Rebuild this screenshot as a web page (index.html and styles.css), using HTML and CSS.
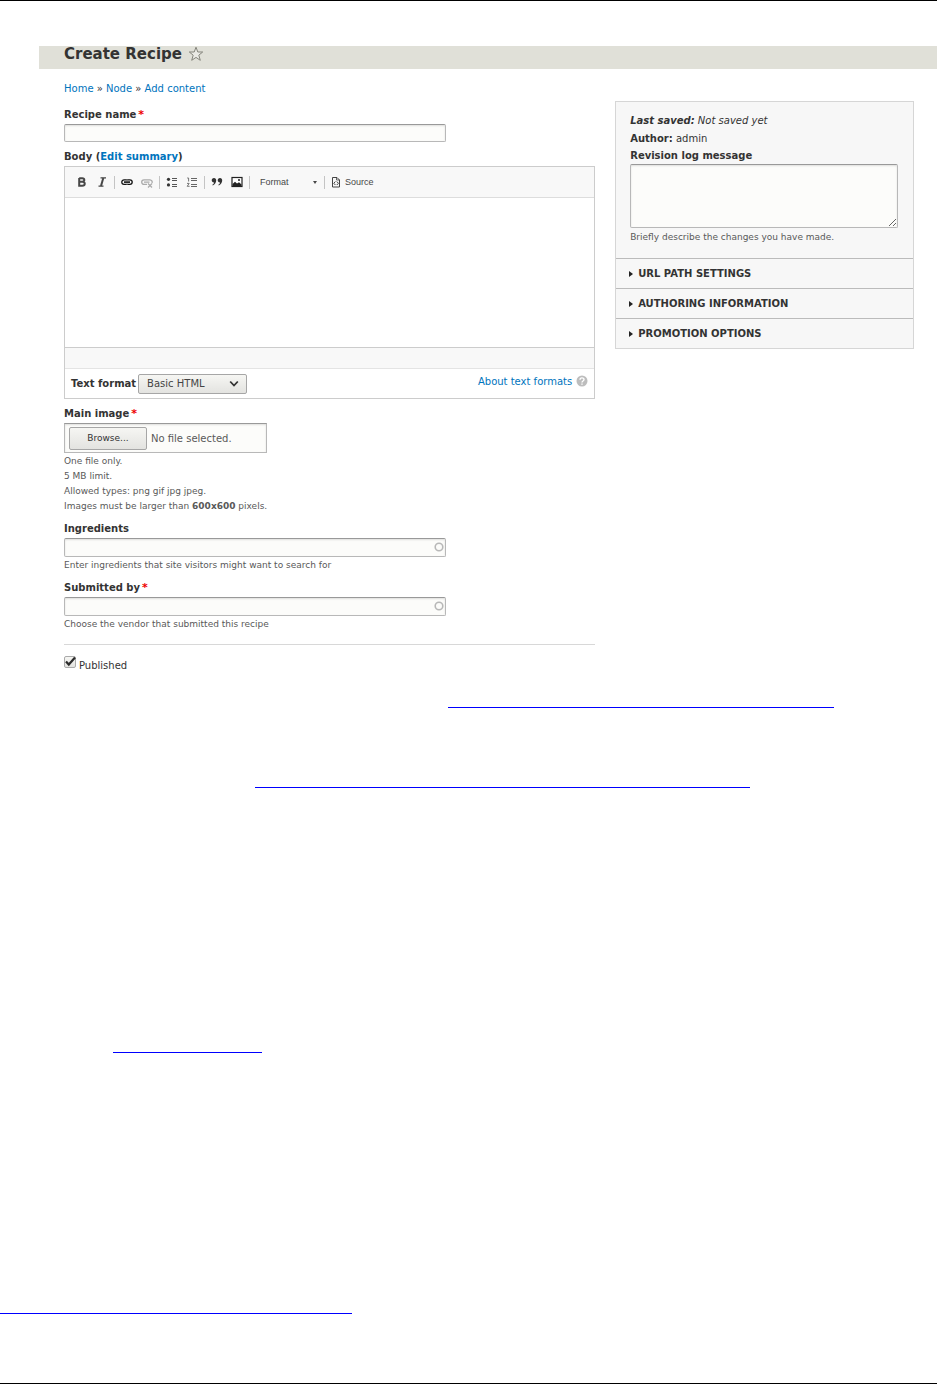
FILE: index.html
```html
<!DOCTYPE html>
<html lang="en">
<head>
    <meta charset="UTF-8">
    <meta name="viewport" content="width=device-width, initial-scale=1.0">
    <title>Create Recipe</title>
    <link rel="stylesheet" href="styles.css">
</head>
<body>
    <div class="sheet">
        <header class="title-bar">
            <h1>Create Recipe</h1>
            <button type="button" class="star" aria-label="Add to shortcuts">
                <svg width="16" height="16" viewBox="0 0 16 16" fill="#e9e9e4" stroke="#85857c" stroke-width="1"><path d="M8 1.2L9.8 6H14.7L10.8 9.2L12.3 14.3L8 11.4L3.7 14.3L5.2 9.2L1.3 6H6.2Z"/></svg>
            </button>
        </header>

        <nav class="breadcrumb">
            <a href="#">Home</a> » <a href="#">Node</a> » <a href="#">Add content</a>
        </nav>

        <form class="columns">
            <div class="main">
                <div class="field">
                    <label class="label" for="name">Recipe name<span class="required">*</span></label>
                    <input class="text short" type="text" id="name">
                </div>

                <div class="field">
                    <div class="label"><label for="body">Body</label> (<a href="#">Edit summary</a>)</div>
                    <div class="editor">
                        <div class="toolbar">
                            <button type="button" aria-label="Bold"><svg width="12" height="12" viewBox="0 0 12 12" fill="none" stroke="#474747" stroke-width="2"><path d="M3.2 2.2H6.2C9 2.2 9 5.8 6.2 5.8H3.2M6.2 5.8C9.6 5.8 9.6 9.8 6.2 9.8H3.2V2"/></svg></button>
                            <button type="button" aria-label="Italic"><svg width="12" height="12" viewBox="0 0 12 12" fill="none" stroke="#474747"><path d="M4.5 1.8H10M2.5 10.2H7.5" stroke-width="1.2"/><path d="M7.3 2L5 10" stroke-width="2"/></svg></button>
                            <span class="sep"></span>
                            <button type="button" aria-label="Link"><svg width="12" height="12" viewBox="0 0 12 12" fill="none" stroke="#111"><rect x="0.8" y="3.8" width="10.4" height="4.6" rx="2.3" stroke-width="1.3"/><path d="M3 6.1H9" stroke-width="1.6"/><path d="M6 3V4.5M6 7.8V9" stroke="#777"/></svg></button>
                            <button type="button" aria-label="Unlink"><svg width="12" height="12" viewBox="0 0 12 12" fill="none" stroke="#aaa"><path d="M6 8.4H3A2.3 2.3 0 0 1 3 3.8H9A2.3 2.3 0 0 1 11 7M3 6.1H8.5" stroke-width="1.3"/><path d="M7 7.5L11 11.5M11 7.5L7 11.5" stroke-width="1.2"/></svg></button>
                            <span class="sep"></span>
                            <button type="button" aria-label="Bulleted list"><svg width="12" height="12" viewBox="0 0 12 12" fill="#333"><circle cx="2.5" cy="3.3" r="1.6"/><circle cx="2.5" cy="8.9" r="1.6"/><path d="M6 2H11V3H6zM6 4H11V5H6zM6 8H11V9H6zM6 10H11V11H6z" fill="#555"/></svg></button>
                            <button type="button" aria-label="Numbered list"><svg width="12" height="12" viewBox="0 0 12 12" fill="none" stroke="#666"><path d="M1.2 2H2.6V5.5M1 7.4H3.2L1.2 10.3H3.6" stroke-width="0.9"/><path d="M5 2.5H11M5 4.5H11M5 8.5H11M5 10.5H11"/></svg></button>
                            <span class="sep"></span>
                            <button type="button" aria-label="Block quote"><svg width="12" height="12" viewBox="0 0 12 12" fill="#333"><path d="M3 2C6.2 2 6 7.6 1.8 9.4L1.3 8.7C2.6 7.9 3 7.2 3 6.4C-0.1 6.4 0 2 3 2zM9 2C12.2 2 12 7.6 7.8 9.4L7.3 8.7C8.6 7.9 9 7.2 9 6.4C5.9 6.4 6 2 9 2z"/></svg></button>
                            <button type="button" aria-label="Image"><svg width="12" height="12" viewBox="0 0 12 12"><rect x="1" y="1.5" width="10" height="9" fill="#fff" stroke="#222" stroke-width="1.2"/><path d="M1.5 10V8L4 5.8L6 7.5L8 6.3L10.5 8.4V10z" fill="#222"/><circle cx="8" cy="4" r="1" fill="#222"/></svg></button>
                            <span class="sep"></span>
                            <button type="button" class="format">Format <svg width="4" height="3" viewBox="0 0 4 3" fill="#474747"><path d="M0 0H4L2 3z"/></svg></button>
                            <span class="sep"></span>
                            <button type="button" class="source"><svg width="10" height="12" viewBox="0 0 10 12" fill="none" stroke="#444"><path d="M1.5 1.5H6L8.5 4V11H1.5z"/><path d="M5.5 1.5V4H8.5" stroke-width="0.8"/><path d="M4.4 5.5L2.8 7.3L4.4 9M5.8 5.5L7.4 7.3L5.8 9"/></svg>Source</button>
                        </div>
                        <textarea class="edit-area" id="body"></textarea>
                        <div class="statusbar"></div>
                        <div class="format-row">
                            <label for="format">Text format</label>
                            <span class="select-wrap">
                                <select id="format"><option>Basic HTML</option></select>
                                <svg class="chevron" width="10" height="8" viewBox="0 0 10 8" fill="none" stroke="#333" stroke-width="1.8"><path d="M1.2 1.5L5 5.5L8.8 1.5"/></svg>
                            </span>
                            <a class="about" href="#">About text formats
                                <svg width="12" height="12" viewBox="0 0 12 12" fill="none"><circle cx="6" cy="6" r="5.5" fill="#bdbdbd"/><path d="M4 4.8C4 2.2 8 2.3 8 4.6C8 6 6 6 6 7.4M6 8.4V9.8" stroke="#fff" stroke-width="1.4"/></svg>
                            </a>
                        </div>
                    </div>
                </div>

                <div class="field">
                    <label class="label" for="image">Main image<span class="required">*</span></label>
                    <div class="file">
                        <span class="browse">Browse...</span>
                        <span>No file selected.</span>
                        <input type="file" id="image">
                    </div>
                    <div class="description">
                        One file only.<br>
                        5 MB limit.<br>
                        Allowed types: png gif jpg jpeg.<br>
                        Images must be larger than <strong>600x600</strong> pixels.
                    </div>
                </div>

                <div class="field">
                    <label class="label" for="ingredients">Ingredients</label>
                    <div class="autocomplete">
                        <input class="text" type="text" id="ingredients">
                        <svg class="throbber" width="10" height="10" viewBox="0 0 10 10" fill="none" stroke="#b8b8b8" stroke-width="1.6"><circle cx="5" cy="5" r="3.8"/></svg>
                    </div>
                    <div class="description">Enter ingredients that site visitors might want to search for</div>
                </div>

                <div class="field">
                    <label class="label" for="vendor">Submitted by<span class="required">*</span></label>
                    <div class="autocomplete">
                        <input class="text" type="text" id="vendor">
                        <svg class="throbber" width="10" height="10" viewBox="0 0 10 10" fill="none" stroke="#b8b8b8" stroke-width="1.6"><circle cx="5" cy="5" r="3.8"/></svg>
                    </div>
                    <div class="description">Choose the vendor that submitted this recipe</div>
                </div>

                <div class="published">
                    <span class="check">
                        <input type="checkbox" id="published" checked>
                        <svg class="tick" width="12" height="12" viewBox="0 0 12 12" fill="none" stroke="#2b2b2b" stroke-width="2.2"><path d="M2 5.5L4.8 8.6L11 1.6"/></svg>
                    </span>
                    <label for="published">Published</label>
                </div>
            </div>

            <aside class="side">
                <div class="meta">
                    <p><em><strong>Last saved:</strong> Not saved yet</em></p>
                    <p><strong>Author:</strong> admin</p>
                    <label class="label" for="log">Revision log message</label>
                    <textarea class="log" id="log"></textarea>
                    <div class="description">Briefly describe the changes you have made.</div>
                </div>
                <details><summary>URL path settings</summary></details>
                <details><summary>Authoring information</summary></details>
                <details><summary>Promotion options</summary></details>
            </aside>
        </form>

        <div class="rules">
            <hr class="rule first">
            <hr class="rule second">
            <hr class="rule third">
            <hr class="rule fourth">
        </div>
    </div>
</body>
</html>
```
FILE: styles.css
```css
* {
    box-sizing: border-box;
}
body {
    margin: 0;
    background: #fff;
    color: #333;
    font-family: "DejaVu Sans", sans-serif;
    font-size: 10px;
    line-height: 15px;
}
a {
    color: #0074bd;
    text-decoration: none;
}
button, input, select, textarea {
    font-family: inherit;
    margin: 0;
}
.sheet {
    border-top: 1px solid #000;
    border-bottom: 1px solid #000;
    padding-top: 45px;
}
.title-bar {
    display: flex;
    align-items: flex-start;
    gap: 6px;
    height: 23px;
    margin-left: 39px;
    padding-left: 25px;
    background: #e0e0d8;
}
h1 {
    margin: 0;
    font-size: 15px;
    line-height: 16px;
}
.star {
    display: flex;
    padding: 0;
    border: 0;
    background: none;
}
.breadcrumb {
    margin: 11px 0 3px 64px;
    line-height: 18px;
}
.columns {
    display: grid;
    grid-template-columns: 16fr 9fr;
    gap: 20px;
    align-items: start;
    margin: 0 23px 0 64px;
}
.main {
    padding-top: 5px;
}
.field {
    margin-bottom: 6px;
}
.label {
    display: block;
    font-weight: bold;
    line-height: 18px;
}
.required {
    margin-left: 2px;
    color: #e00;
    font-size: 11px;
    line-height: 12px;
}
.text {
    display: block;
    width: 382px;
    max-width: 100%;
    height: 19px;
    padding: 2px 6px;
    border: 1px solid #b8b8b8;
    border-top-color: #999;
    border-radius: 2px;
    background: #fcfcfa;
    box-shadow: inset 0 1px 2px rgba(0, 0, 0, 0.12);
    font-size: 9px;
}
.short {
    height: 18px;
}
.autocomplete {
    position: relative;
    width: 382px;
    max-width: 100%;
}
.throbber {
    position: absolute;
    top: 4px;
    right: 2px;
}
.description {
    padding-top: 1px;
    color: #595959;
    font-size: 9px;
}

/* editor */
.editor {
    border: 1px solid #ccc;
}
.toolbar {
    display: flex;
    align-items: center;
    height: 31px;
    padding-left: 7px;
    border-bottom: 1px solid #ddd;
    background: #f8f8f8;
}
.toolbar button {
    display: flex;
    align-items: center;
    padding: 4px;
    border: 0;
    background: none;
    color: #474747;
    font-family: "Liberation Sans", Arial, sans-serif;
    font-size: 9px;
}
.sep {
    width: 1px;
    height: 13px;
    margin: 0 2px;
    background: #c4c4c4;
}
.toolbar .format {
    justify-content: space-between;
    width: 70px;
    padding: 4px 5px 4px 8px;
}
.toolbar .source {
    gap: 4px;
}
.edit-area {
    display: block;
    width: 100%;
    height: 149px;
    border: 0;
    resize: none;
}
.statusbar {
    height: 22px;
    border-top: 1px solid #ccc;
    border-bottom: 1px solid #e4e4e4;
    background: #f8f8f8;
}
.format-row {
    display: flex;
    align-items: center;
    gap: 2px;
    height: 29px;
    padding: 0 6px;
}
.format-row label {
    font-weight: bold;
}
.select-wrap {
    position: relative;
}
.select-wrap select {
    display: block;
    width: 109px;
    height: 20px;
    padding: 0 8px;
    appearance: none;
    border: 1px solid #a6a6a6;
    border-radius: 2px;
    background: linear-gradient(#f6f6f3, #e3e3e0);
    color: #444;
    font-size: 10px;
}
.chevron {
    position: absolute;
    top: 6px;
    right: 8px;
}
.about {
    display: flex;
    align-items: center;
    gap: 4px;
    height: 24px;
    margin-left: auto;
    align-self: flex-start;
}

/* file upload */
.file {
    position: relative;
    display: flex;
    align-items: center;
    gap: 4px;
    width: 203px;
    height: 30px;
    padding: 0 4px;
    border: 1px solid #b8b8b8;
    border-top-color: #999;
    background: #fcfcfa;
    box-shadow: inset 0 1px 2px rgba(0, 0, 0, 0.12);
    color: #595959;
}
.browse {
    width: 78px;
    padding: 3px 0;
    border: 1px solid #a6a6a6;
    border-radius: 2px;
    background: linear-gradient(#f6f6f3, #e3e3e0);
    color: #333;
    font-size: 9px;
    text-align: center;
}
.file input {
    position: absolute;
    inset: 0;
    width: 100%;
    opacity: 0;
}

.published {
    display: flex;
    gap: 3px;
    margin-top: 12px;
    padding-top: 11px;
    border-top: 1px solid #d8d8d8;
}
.published label {
    padding-top: 2px;
}
.check {
    position: relative;
    height: 12px;
}
.check input {
    display: block;
    width: 12px;
    height: 12px;
    appearance: none;
    border: 1px solid #aaa;
    border-radius: 2px;
    background: linear-gradient(#f6f6f3, #e3e3e0);
}
.tick {
    position: absolute;
    top: 0;
    left: 0;
    pointer-events: none;
}

/* sidebar */
.side {
    border: 1px solid #d6d6d6;
    background: #f7f7f7;
}
.meta {
    padding: 10px 15px 13px 14px;
}
.meta p {
    margin: 0;
    line-height: 18px;
}
.meta .label {
    line-height: 16px;
}
.meta .description {
    padding-top: 2px;
}
.log {
    display: block;
    width: 100%;
    height: 64px;
    border: 1px solid #b8b8b8;
    border-top-color: #999;
    border-radius: 2px;
    background: #fcfcfa;
    box-shadow: inset 0 1px 2px rgba(0, 0, 0, 0.12);
}
.side details {
    border-top: 1px solid #bbb;
}
.side summary {
    display: flex;
    align-items: center;
    gap: 5px;
    height: 29px;
    padding-left: 13px;
    font-weight: bold;
    font-size: 10px;
    text-transform: uppercase;
}
.side summary::before {
    content: "";
    border: solid transparent;
    border-width: 3px 0 3px 4px;
    border-left-color: #222;
}

/* underlines below the form */
.rules {
    padding-bottom: 69px;
}
.rule {
    height: 1px;
    margin: 0;
    border: 0;
    background: #00f;
}
.first {
    width: 386px;
    margin: 34px 0 0 448px;
}
.second {
    width: 495px;
    margin: 79px 0 0 255px;
}
.third {
    width: 149px;
    margin: 264px 0 0 113px;
}
.fourth {
    width: 352px;
    margin: 260px 0 0 0;
}
```
